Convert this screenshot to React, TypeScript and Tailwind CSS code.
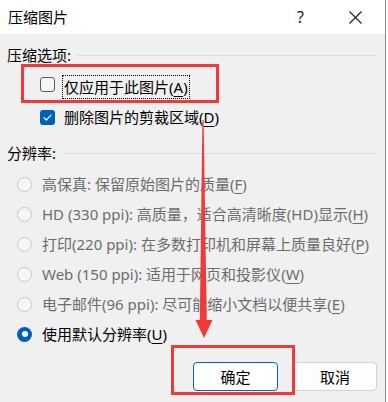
import type { ReactNode } from 'react';

const font = { fontFamily: '"Noto Sans", "Noto Sans CJK SC", sans-serif' };

function Key({ k }: { k: string }) {
  return (
    <>
      (<span className="underline underline-offset-[3px] decoration-1">{k}</span>)
    </>
  );
}

function GroupHeader({ label, lineGap }: { label: string; lineGap: string }) {
  return (
    <div className="flex h-[20px] items-center pl-[7px] pr-[7px]">
      <span className="text-[15px] leading-[20px] text-black">{label}</span>
      <div className={`${lineGap} h-px flex-1 bg-[#dcdcdc]`} />
    </div>
  );
}

function CheckMark() {
  return (
    <svg width="15" height="15" viewBox="0 0 15 15" fill="none">
      <path d="M4 7.8 L6.3 10 L11 5.2" stroke="#fff" strokeWidth="1.2" strokeLinecap="round" strokeLinejoin="round" />
    </svg>
  );
}

function Radio({ checked, disabled, children }: { checked?: boolean; disabled?: boolean; children: ReactNode }) {
  return (
    <div className="flex h-[30px] items-center pl-[17px]">
      {checked ? (
        <div className="flex h-[15px] w-[15px] items-center justify-center rounded-full bg-[#005fb8]">
          <div className="h-[6px] w-[6px] rounded-full bg-white" />
        </div>
      ) : (
        <div
          className={`h-[15px] w-[15px] rounded-full border ${
            disabled ? 'border-[#c6c6c6] bg-[#f6f6f6]' : 'border-[#5e5e5e] bg-[#f6f6f6]'
          }`}
        />
      )}
      <span
        className={`ml-[10px] whitespace-nowrap text-[15px] leading-[20px] ${
          disabled ? 'text-[#6d6d6d]' : 'text-black'
        }`}
      >
        {children}
      </span>
    </div>
  );
}

export default function App() {
  return (
    <div className="relative h-[402px] w-[388px] overflow-hidden bg-white" style={font}>
      <div className="flex h-full w-[386px] flex-col border-r border-[#8c8c8c] bg-[#f0f0f0]">
        {/* title bar */}
        <div className="flex h-[34px] shrink-0 items-center bg-white pl-[8px]">
          <span className="text-[15px] leading-[20px] text-black">压缩图片</span>
          <span className="ml-auto mr-[45px] text-[16px] leading-[20px] text-[#1a1a1a]">?</span>
          <svg className="mr-[23px]" width="13" height="13" viewBox="0 0 13 13">
            <path d="M0.5 0.5 L12.5 12.5 M12.5 0.5 L0.5 12.5" stroke="#1a1a1a" strokeWidth="1.1" />
          </svg>
        </div>

        <div className="mt-[11px]">
          <GroupHeader label="压缩选项:" lineGap="ml-[6px]" />
        </div>

        <div className="mt-[10px] flex h-[24px] items-start pl-[40px]">
          <div className="mt-[2px] h-[15px] w-[15px] rounded-[3px] border border-[#5b5b5b] bg-[#f6f6f6]" />
          <div className="ml-[7px] flex h-[24px] items-center border border-dotted border-black px-[1px]">
            <span className="whitespace-nowrap text-[15px] leading-[20px] text-black">
              仅应用于此图片<Key k="A" />
            </span>
          </div>
        </div>

        <div className="mt-[8px] flex h-[20px] items-center pl-[40px]">
          <div className="flex h-[15px] w-[15px] items-center justify-center rounded-[3px] bg-[#005fb8]">
            <CheckMark />
          </div>
          <span className="ml-[9px] whitespace-nowrap text-[15px] leading-[20px] text-black">
            删除图片的剪裁区域<Key k="D" />
          </span>
        </div>

        <div className="mt-[16px]">
          <GroupHeader label="分辨率:" lineGap="ml-[6px]" />
        </div>

        <div className="mt-[6px] flex flex-col">
          <Radio disabled>
            高保真: 保留原始图片的质量<Key k="F" />
          </Radio>
          <Radio disabled>
            HD (330 ppi): 高质量，适合高清晰度(HD)显示<Key k="H" />
          </Radio>
          <Radio disabled>
            打印(220 ppi): 在多数打印机和屏幕上质量良好<Key k="P" />
          </Radio>
          <Radio disabled>
            Web (150 ppi): 适用于网页和投影仪<Key k="W" />
          </Radio>
          <Radio disabled>
            电子邮件(96 ppi): 尽可能缩小文档以便共享<Key k="E" />
          </Radio>
          <Radio checked>
            使用默认分辨率<Key k="U" />
          </Radio>
        </div>

        <div className="mt-[13px] flex justify-end gap-[15px] pr-[8px]">
          <button
            type="button"
            className="h-[29px] w-[85px] rounded-[4px] border border-[#0067c0] bg-white text-[15px] leading-[20px] text-black"
          >
            确定
          </button>
          <button
            type="button"
            className="h-[29px] w-[84px] rounded-[4px] border border-[#d2d2d2] bg-[#fdfdfd] text-[15px] leading-[20px] text-black"
          >
            取消
          </button>
        </div>
      </div>

      {/* annotations */}
      <div className="pointer-events-none absolute left-[21px] top-[64px] h-[39px] w-[198px] border-[3px] border-[#f03a3a]" />
      <div className="pointer-events-none absolute left-[171px] top-[345px] h-[50px] w-[124px] border-[3px] border-[#f03a3a]" />
      <svg className="pointer-events-none absolute left-0 top-0" width="388" height="402" viewBox="0 0 388 402">
        <polygon points="202.4,120 203.6,120 206.8,322 199.8,322" fill="#f03a3a" />
        <polygon points="195.5,320 212.5,320 204,338" fill="#f03a3a" />
      </svg>
    </div>
  );
}
